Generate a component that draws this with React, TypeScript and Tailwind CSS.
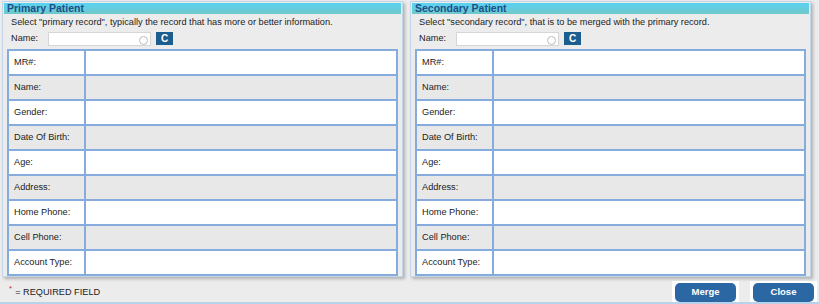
import React from "react";

const fields = [
  "MR#:",
  "Name:",
  "Gender:",
  "Date Of Birth:",
  "Age:",
  "Address:",
  "Home Phone:",
  "Cell Phone:",
  "Account Type:",
];

function PatientPanel({ title, hint }: { title: string; hint: string }) {
  return (
    <div className="w-[401px] h-[276px] border border-[#c3d5e9] bg-[#ececec] shadow-[2px_2px_3px_rgba(0,0,0,0.25)] flex flex-col">
      <div className="mx-[1px] mt-[1px] h-[11px] bg-gradient-to-b from-[#58d2f2] to-[#70c8c8] pl-[3px] text-[10.5px] leading-[11px] font-bold text-[#1c4f8a]">
        {title}
      </div>
      <div className="pl-[8px] mt-[2px] h-[12px] text-[9.2px] leading-[12px] text-[#222]">{hint}</div>
      <div className="flex items-center pl-[8px] mt-[3px] h-[15px]">
        <span className="w-[37px] text-[9.2px] text-[#222]">Name:</span>
        <div className="w-[103px] h-[14px] bg-white border border-[#d6d6d6] flex items-center justify-end pr-[2px]">
          <span className="w-[9px] h-[9px] rounded-full border border-[#bdbdbd] mt-[3px]" />
        </div>
        <div className="ml-[5px] w-[17px] h-[13px] bg-[#1b5d8e] text-white text-[10px] font-bold leading-[13px] text-center">
          C
        </div>
      </div>
      <div className="mx-[4px] mt-[3px] border-2 border-[#85acdc]">
        {fields.map((f, i) => (
          <div
            key={f}
            className={`flex ${i > 0 ? "h-[25px] border-t-2 border-[#85acdc]" : "h-[23px]"} ${
              i % 2 === 1 ? "bg-[#e8e8e8]" : "bg-white"
            }`}
          >
            <div className="w-[77px] pl-[5px] flex items-center whitespace-nowrap text-[9.2px] text-[#222] border-r-2 border-[#85acdc]">
              {f}
            </div>
            <div className="flex-1" />
          </div>
        ))}
      </div>
    </div>
  );
}

function FooterButton({ label }: { label: string }) {
  return (
    <div className="bg-white px-[3px] pt-[2px] h-[21px]">
      <div className="w-[61px] h-[19px] rounded-[5px] bg-[#2b67a3] text-white text-[9.5px] font-bold flex items-center justify-center">
        {label}
      </div>
    </div>
  );
}

export default function App() {
  return (
    <div className="w-[819px] h-[304px] bg-[#ececec] font-['Liberation_Sans',Arial,sans-serif] flex flex-col">
      <div className="flex gap-[7px] pl-[2px] pt-[1px]">
        <PatientPanel
          title="Primary Patient"
          hint={'Select "primary record", typically the record that has more or better information.'}
        />
        <PatientPanel
          title="Secondary Patient"
          hint={'Select "secondary record", that is to be merged with the primary record.'}
        />
      </div>
      <div className="flex-1 flex items-end border-b-2 border-[#b9d2ec]">
        <div className="flex items-center pl-[9px] pb-[2px] text-[9.2px] text-[#222]">
          <span className="text-[#d03030] text-[8px] -mt-[8px] mr-[3px]">*</span>
          <span>= REQUIRED FIELD</span>
        </div>
        <div className="ml-auto flex gap-[11px] mr-[2px]">
          <FooterButton label="Merge" />
          <FooterButton label="Close" />
        </div>
      </div>
    </div>
  );
}
